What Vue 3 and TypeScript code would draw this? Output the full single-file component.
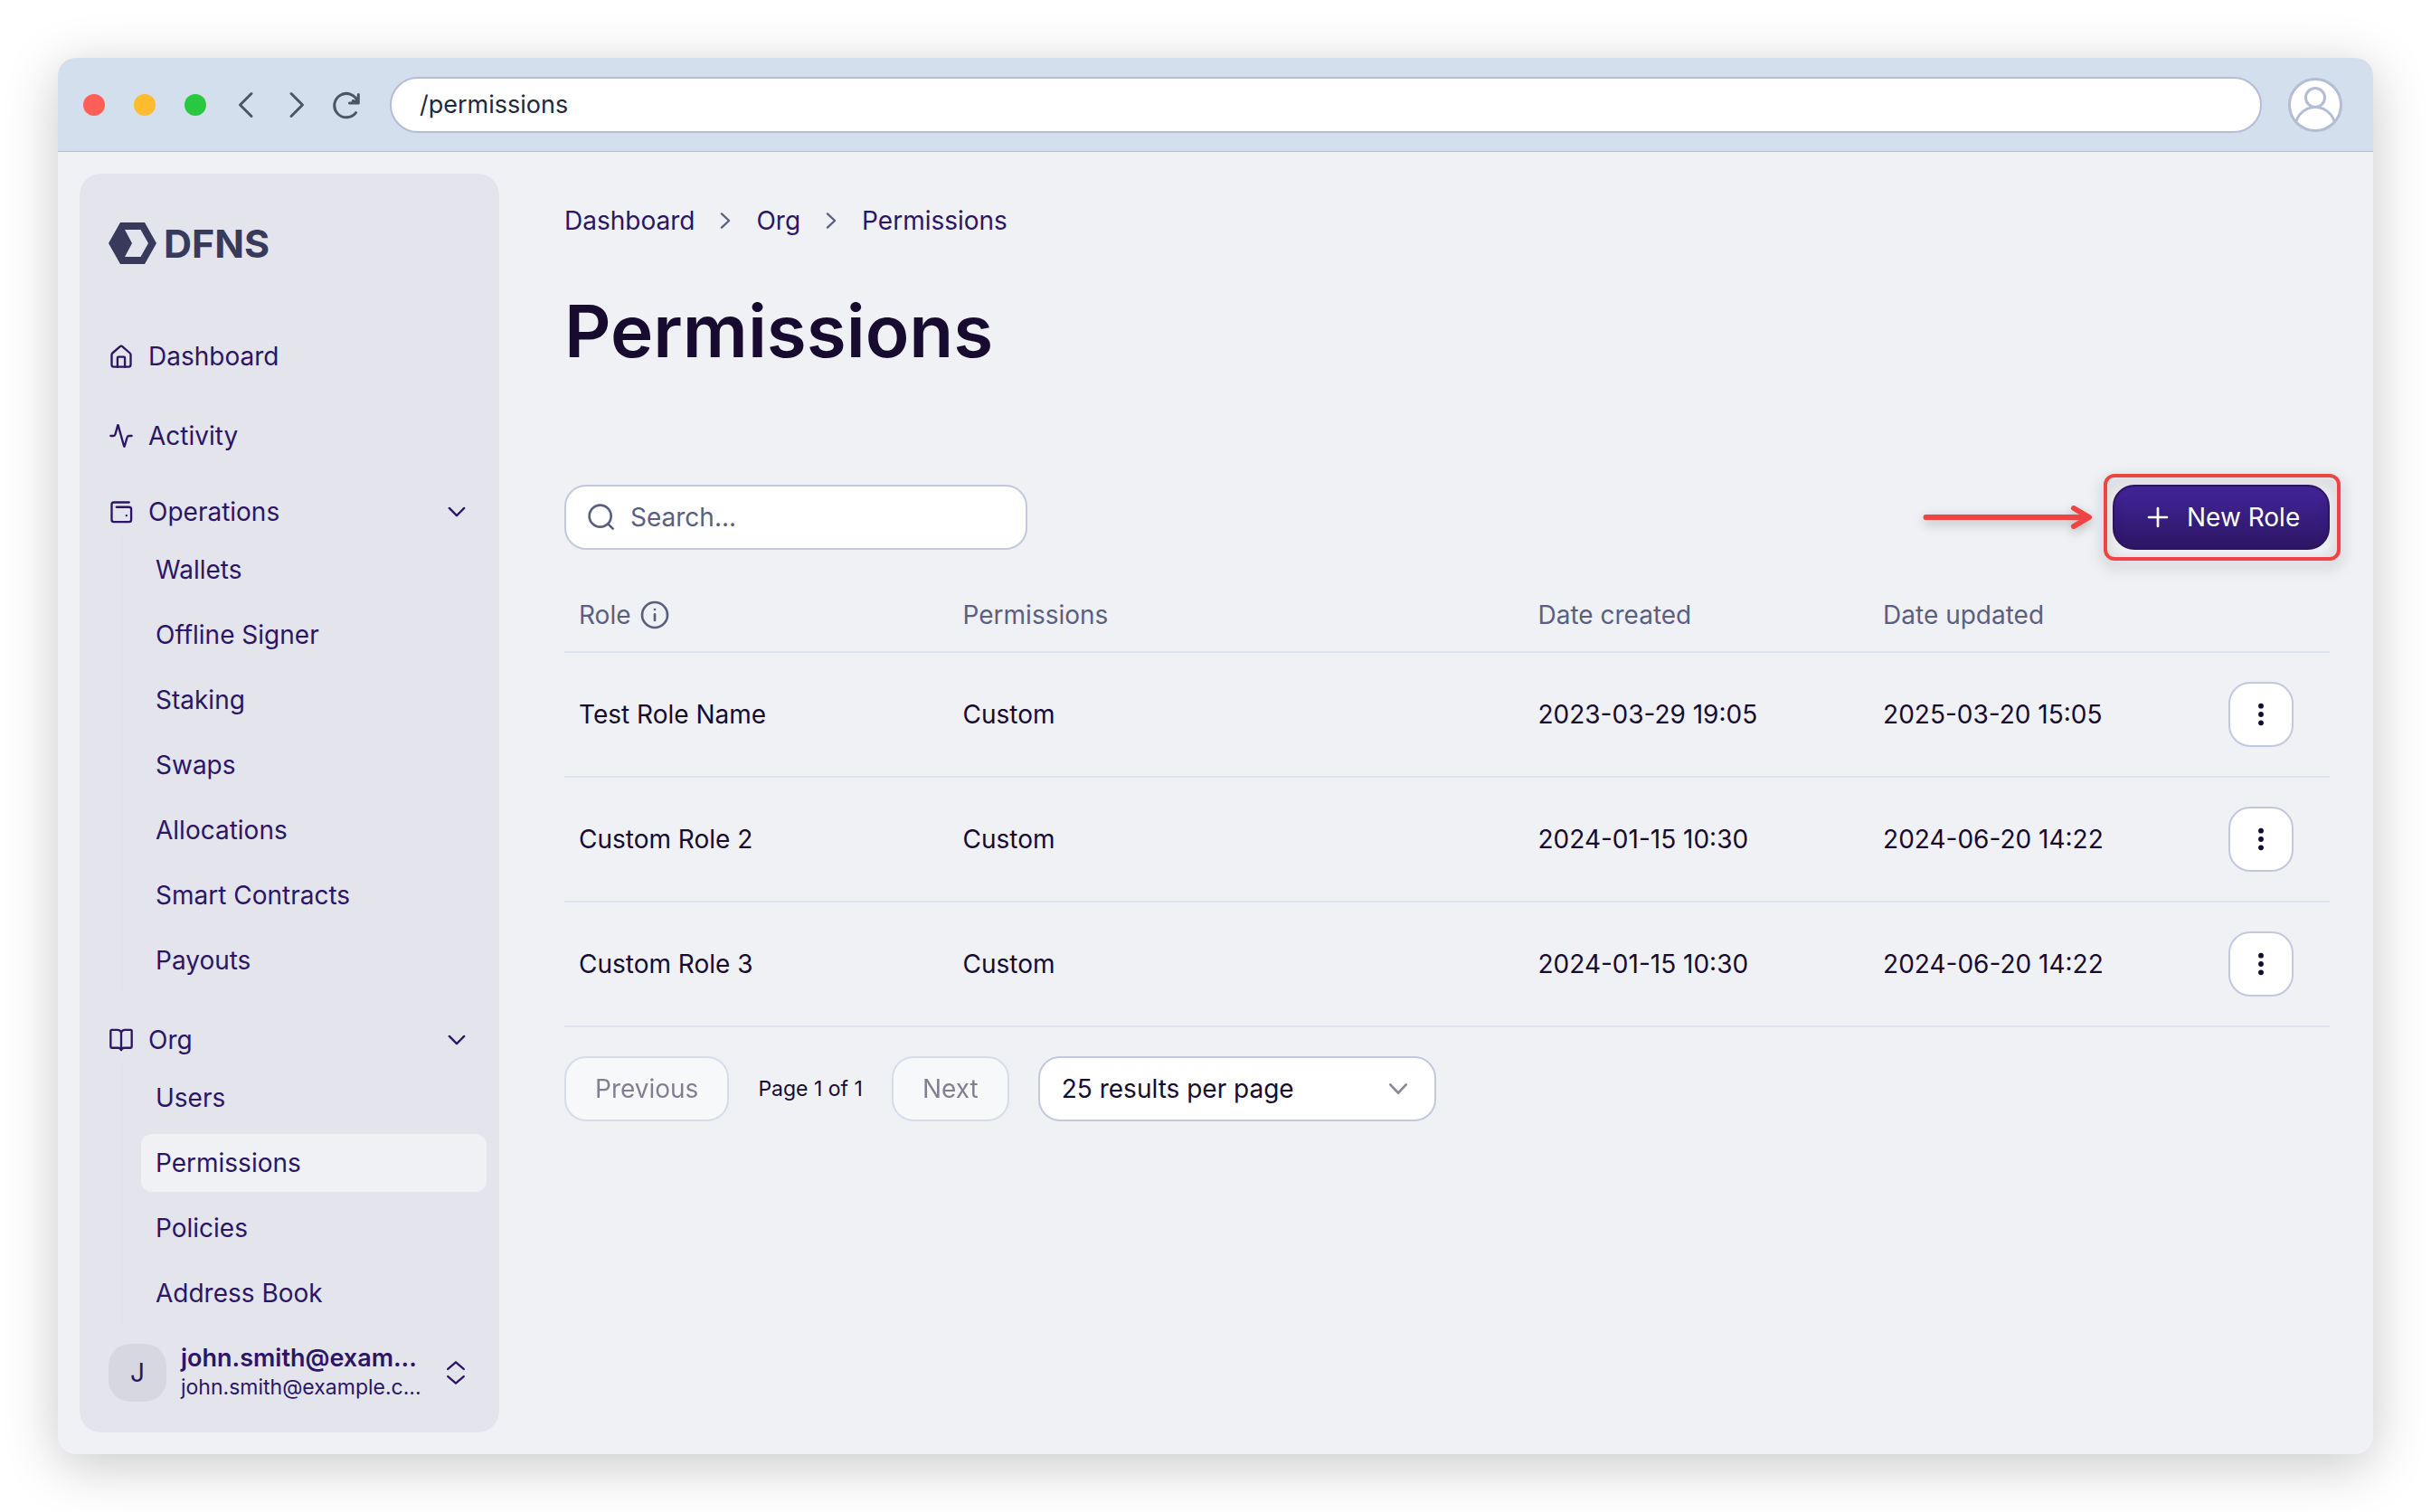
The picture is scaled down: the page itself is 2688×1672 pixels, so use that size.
<script setup lang="ts">
import { ref } from 'vue'

interface Role {
  name: string
  permissions: string
  created: string
  updated: string
}

const address = ref('/permissions')
const search = ref('')
const pageSize = ref('25')

const operations: string[] = [
  'Wallets',
  'Offline Signer',
  'Staking',
  'Swaps',
  'Allocations',
  'Smart Contracts',
  'Payouts',
]
const org: string[] = ['Users', 'Permissions', 'Policies', 'Address Book']
const current = 'Permissions'

const roles: Role[] = [
  { name: 'Test Role Name', permissions: 'Custom', created: '2023-03-29 19:05', updated: '2025-03-20 15:05' },
  { name: 'Custom Role 2', permissions: 'Custom', created: '2024-01-15 10:30', updated: '2024-06-20 14:22' },
  { name: 'Custom Role 3', permissions: 'Custom', created: '2024-01-15 10:30', updated: '2024-06-20 14:22' },
]
</script>

<template>
  <div class="window">
    <header class="chrome">
      <div class="lights">
        <span class="light red"></span>
        <span class="light amber"></span>
        <span class="light green"></span>
      </div>
      <div class="controls">
        <button type="button" class="chrome-btn" aria-label="Back">
          <svg viewBox="0 0 32 32"><path d="M22 3.500L9.500 16L22 28.500" /></svg>
        </button>
        <button type="button" class="chrome-btn" aria-label="Forward">
          <svg viewBox="0 0 32 32"><path d="M10 3.500L22.500 16L10 28.500" /></svg>
        </button>
        <button type="button" class="chrome-btn" aria-label="Reload">
          <svg viewBox="0 0 32 32"><path d="M25.500 24.600A13.200 13.200 0 1 1 27.500 12.500M28.300 4.500v9.500h-9.800M28.300 14l-6-2.500" /></svg>
        </button>
      </div>
      <input v-model="address" class="address" type="text" aria-label="Address" />
      <svg class="profile" viewBox="0 0 60 60" aria-hidden="true">
        <circle cx="30" cy="30" r="28.500" fill="#fff" />
        <circle cx="30" cy="22" r="10.500" />
        <path d="M9 48a22 22 0 0 1 42 0" />
      </svg>
    </header>

    <div class="body">
      <aside class="sidebar">
        <a href="#" class="logo" aria-label="DFNS home">
          <svg viewBox="0 0 53 46">
            <path fill-rule="evenodd" d="M13 0H40L53 23L40 46H13L0 23ZM18 8L26 23L18 38H35.500L44 23L35.500 8Z" />
          </svg>
          <span>DFNS</span>
        </a>

        <nav class="nav">
          <a href="#" class="top-link">
            <svg class="icon" viewBox="0 0 24 24">
              <path d="M3 10.500a2 2 0 0 1 .7-1.500l7-6.200a2 2 0 0 1 2.600 0l7 6.200a2 2 0 0 1 .7 1.500V20a2 2 0 0 1-2 2H5a2 2 0 0 1-2-2z" />
              <path d="M8.500 22v-8.500a1 1 0 0 1 1-1h5a1 1 0 0 1 1 1V22" />
            </svg>
            Dashboard
          </a>
          <a href="#" class="top-link">
            <svg class="icon" viewBox="0 0 24 24">
              <path d="M22 12h-2.500a2 2 0 0 0-1.900 1.500l-2.400 8.400a.2.2 0 0 1-.5 0L9.200 2.200a.2.2 0 0 0-.5 0l-2.300 8.300A2 2 0 0 1 4.500 12H2" />
            </svg>
            Activity
          </a>

          <section class="group">
            <button type="button" class="group-head">
              <svg class="icon" viewBox="0 0 24 24">
                <path d="M19.500 3H5a2 2 0 0 0-2 2v14.500a2 2 0 0 0 2 2h14.500a2 2 0 0 0 2-2V9.500a2 2 0 0 0-2-2H7.500" />
                <path d="M17 15.500h.01" />
              </svg>
              <span>Operations</span>
              <svg class="icon caret" viewBox="0 0 24 24"><path d="M5 8.500l7 7 7-7" /></svg>
            </button>
            <ul class="sub">
              <li v-for="item in operations" :key="item"><a href="#" class="sub-link">{{ item }}</a></li>
            </ul>
          </section>

          <section class="group">
            <button type="button" class="group-head">
              <svg class="icon" viewBox="0 0 24 24">
                <path d="M12 4.500v17" />
                <path d="M3 19.500a1 1 0 0 1-1-1V3.500a1 1 0 0 1 1-1h5.500a4 4 0 0 1 3.500 2 4 4 0 0 1 3.500-2H21a1 1 0 0 1 1 1v15a1 1 0 0 1-1 1h-6a3 3 0 0 0-3 2 3 3 0 0 0-3-2z" />
              </svg>
              <span>Org</span>
              <svg class="icon caret" viewBox="0 0 24 24"><path d="M5 8.500l7 7 7-7" /></svg>
            </button>
            <ul class="sub">
              <li v-for="item in org" :key="item">
                <a href="#" class="sub-link" :class="{ active: item === current }">{{ item }}</a>
              </li>
            </ul>
          </section>
        </nav>

        <button type="button" class="account">
          <span class="initial">J</span>
          <span class="who">
            <strong>john.smith@exam...</strong>
            <small>john.smith@example.c...</small>
          </span>
          <svg class="icon caret" viewBox="0 0 24 24"><path d="M4.500 8.500L12 2l7.500 6.500M4.500 15.500l7.500 6.500 7.500-6.500" /></svg>
        </button>
      </aside>

      <main class="main">
        <nav class="crumbs" aria-label="Breadcrumb">
          <a href="#">Dashboard</a>
          <svg class="icon" viewBox="0 0 24 24"><path d="M8.500 5.500L15.500 12l-7 6.500" /></svg>
          <a href="#">Org</a>
          <svg class="icon" viewBox="0 0 24 24"><path d="M8.500 5.500L15.500 12l-7 6.500" /></svg>
          <a href="#">Permissions</a>
        </nav>

        <h1>Permissions</h1>

        <div class="toolbar">
          <label class="search">
            <svg class="icon large" viewBox="0 0 24 24">
              <circle cx="11" cy="11" r="9" /><path d="M17.500 17.500l4 4" />
            </svg>
            <input v-model="search" type="text" placeholder="Search..." aria-label="Search roles" />
          </label>
          <div class="callout">
            <svg class="arrow" viewBox="0 0 188 28" aria-hidden="true">
              <path d="M3.500 14H183M167 4l17 10-17 10" />
            </svg>
            <button type="button" class="new-role">
              <svg class="icon large" viewBox="0 0 24 24"><path d="M12 4.500v15M4.500 12h15" /></svg>
              New Role
            </button>
            <span class="highlight"></span>
          </div>
        </div>

        <table class="roles">
          <colgroup>
            <col class="c-role" />
            <col class="c-perm" />
            <col class="c-date" />
            <col class="c-date" />
            <col />
          </colgroup>
          <thead>
            <tr>
              <th scope="col">
                <span class="with-icon">
                  Role
                  <svg class="icon large" viewBox="0 0 24 24">
                    <circle cx="12" cy="12" r="10.500" /><path d="M12 11.500v5M12 7.500h.01" />
                  </svg>
                </span>
              </th>
              <th scope="col">Permissions</th>
              <th scope="col">Date created</th>
              <th scope="col">Date updated</th>
              <th></th>
            </tr>
          </thead>
          <tbody>
            <tr v-for="role in roles" :key="role.name">
              <td>{{ role.name }}</td>
              <td>{{ role.permissions }}</td>
              <td>{{ role.created }}</td>
              <td>{{ role.updated }}</td>
              <td>
                <button type="button" class="more" :aria-label="`Actions for ${role.name}`">
                  <svg viewBox="0 0 24 24">
                    <circle cx="12" cy="4" r="2.500" /><circle cx="12" cy="12" r="2.500" /><circle cx="12" cy="20" r="2.500" />
                  </svg>
                </button>
              </td>
            </tr>
          </tbody>
        </table>

        <div class="pager">
          <button type="button" class="page-btn" disabled>Previous</button>
          <span class="page-info">Page 1 of 1</span>
          <button type="button" class="page-btn" disabled>Next</button>
          <div class="page-size">
            <select v-model="pageSize" aria-label="Results per page">
              <option value="25">25 results per page</option>
              <option value="50">50 results per page</option>
            </select>
            <svg class="icon large" viewBox="0 0 24 24"><path d="M5.500 8.500l6.500 7 6.500-7" /></svg>
          </div>
        </div>
      </main>
    </div>
  </div>
</template>

<style>
body {
  background: #fff;
}
</style>

<style scoped>
* {
  box-sizing: border-box;
}

.window {
  margin: 64px;
  border-radius: 20px;
  background: #eff1f5;
  box-shadow: 0 12px 60px rgba(0, 0, 0, 0.22);
  font-family: Inter, 'Liberation Sans', sans-serif;
  font-size: 28px;
  line-height: 40px;
  color: #170b30;
}

button,
input,
select {
  font: inherit;
  color: inherit;
  margin: 0;
}

button {
  padding: 0;
  border: 0;
  background: none;
  cursor: pointer;
}

a {
  color: #2c1664;
  text-decoration: none;
}

.icon {
  flex: none;
  width: 28px;
  height: 28px;
  fill: none;
  stroke: currentColor;
  stroke-width: 2;
  stroke-linecap: round;
  stroke-linejoin: round;
}

.icon.large {
  width: 32px;
  height: 32px;
}

/* browser chrome */
.chrome {
  display: flex;
  align-items: center;
  height: 104px;
  padding: 0 34px 0 28px;
  border-bottom: 1px solid #b2bfd3;
  border-radius: 20px 20px 0 0;
  background: #d3dfec;
}

.lights {
  display: flex;
  gap: 32px;
}

.light {
  width: 24px;
  height: 24px;
  border-radius: 50%;
}

.red {
  background: #ff5f57;
}

.amber {
  background: #febc2e;
}

.green {
  background: #28c840;
}

.controls {
  display: flex;
  gap: 24px;
  margin: 0 31px 0 28px;
}

.chrome-btn,
.chrome-btn svg {
  display: block;
  width: 32px;
  height: 32px;
}

.chrome-btn svg {
  fill: none;
  stroke: #4b5563;
  stroke-width: 3;
  stroke-linecap: round;
  stroke-linejoin: round;
}

.address {
  flex: 1;
  min-width: 0;
  height: 62px;
  padding: 0 31px;
  border: 2px solid #b4bdd4;
  border-radius: 31px;
  background: #fff;
  color: #1f2937;
  font-size: 27px;
}

.profile {
  width: 60px;
  height: 60px;
  margin-left: 29px;
  fill: none;
  stroke: #b4bdd4;
  stroke-width: 3;
}

/* layout */
.body {
  display: flex;
  padding: 24px;
}

.sidebar {
  display: flex;
  flex: none;
  flex-direction: column;
  width: 464px;
  padding: 54px 14px 34px 32px;
  border-radius: 24px;
  background: #e3e4ec;
  color: #2c1664;
}

.logo {
  display: flex;
  align-items: center;
  gap: 8px;
  height: 46px;
  color: #373a5b;
  font-size: 43px;
  font-weight: 700;
}

.logo svg {
  width: 53px;
  height: 46px;
  fill: currentColor;
}

.nav {
  display: flex;
  flex-direction: column;
  gap: 24px;
  margin-top: 70px;
}

.top-link,
.group-head {
  display: flex;
  align-items: center;
  gap: 16px;
  width: 100%;
  height: 64px;
}

.group-head {
  height: 56px;
  padding-right: 19px;
  text-align: left;
}

.group-head .caret,
.account .caret {
  margin-left: auto;
}

.sub {
  display: flex;
  flex-direction: column;
  gap: 8px;
  margin: 0 0 0 14px;
  padding: 4px 0 4px 20px;
  border-left: 2px solid #dfe3ee;
  list-style: none;
}

.sub-link {
  display: block;
  padding: 12px 16px;
  border-radius: 12px;
}

.sub-link.active {
  background: #eff1f5;
}

.account {
  display: flex;
  align-items: center;
  gap: 16px;
  margin-top: 20px;
  padding-right: 20px;
  text-align: left;
}

.initial {
  flex: none;
  width: 64px;
  height: 64px;
  border-radius: 24px;
  background: #d6d7e0;
  line-height: 64px;
  text-align: center;
}

.who {
  display: flex;
  flex-direction: column;
  min-width: 0;
  line-height: 32px;
  white-space: nowrap;
}

.who strong {
  font-size: 27px;
  font-weight: 600;
}

.who small {
  font-size: 23px;
}

.main {
  flex: 1;
  min-width: 0;
  padding: 32px 24px 0 72px;
}

.crumbs {
  display: flex;
  align-items: center;
  gap: 20px;
}

.crumbs .icon {
  color: #5a5f80;
}

h1 {
  margin: 54px 0 0;
  font-size: 80px;
  font-weight: 600;
  line-height: 96px;
}

.toolbar {
  display: flex;
  align-items: center;
  justify-content: space-between;
  margin-top: 122px;
}

.search {
  display: flex;
  align-items: center;
  gap: 16px;
  width: 512px;
  height: 72px;
  padding: 0 23px;
  border: 2px solid #c3c8de;
  border-radius: 24px;
  background: #fff;
  color: #5a5f80;
}

.search input {
  flex: 1;
  min-width: 0;
  padding: 0;
  border: 0;
  outline: 0;
  background: none;
}

.search input::placeholder {
  color: #5a5f80;
  opacity: 1;
}

.callout {
  position: relative;
  display: flex;
  align-items: center;
  gap: 22px;
}

.arrow {
  width: 188px;
  height: 28px;
  overflow: visible;
  fill: none;
  stroke: #ef4444;
  stroke-width: 6;
  stroke-linecap: round;
  stroke-linejoin: round;
  filter: drop-shadow(0 4px 6px rgba(0, 0, 0, 0.25));
}

.new-role {
  display: flex;
  align-items: center;
  gap: 16px;
  width: 240px;
  height: 72px;
  padding-left: 32px;
  border: 2px solid #2c1664;
  border-radius: 24px;
  background: linear-gradient(#43249a, #2c1664);
  color: #fff;
}

.highlight {
  position: absolute;
  top: -12px;
  right: -12px;
  bottom: -12px;
  width: 262px;
  border: 4px solid #ef4444;
  border-radius: 12px;
  filter: drop-shadow(0 6px 8px rgba(0, 0, 0, 0.3));
  pointer-events: none;
}

/* roles table */
.roles {
  width: 100%;
  margin-top: 32px;
  border-collapse: separate;
  border-spacing: 0;
  table-layout: fixed;
}

.c-role {
  width: 21.75%;
}

.c-perm {
  width: 32.58%;
}

.c-date {
  width: 19.55%;
}

th,
td {
  padding: 0 16px;
  border-bottom: 2px solid #dfe3ef;
  text-align: left;
}

th {
  height: 82px;
  color: #5a5f80;
  font-weight: 400;
}

td {
  height: 138px;
}

.with-icon {
  display: flex;
  align-items: center;
  gap: 10px;
}

.more {
  display: grid;
  place-items: center;
  width: 72px;
  height: 72px;
  border: 2px solid #c3c8de;
  border-radius: 24px;
  background: #fff;
}

.more svg {
  width: 28px;
  height: 28px;
  fill: #170b30;
}

/* pagination */
.pager {
  display: flex;
  align-items: center;
  gap: 32px;
  margin-top: 32px;
}

.page-btn {
  height: 72px;
  padding: 0 32px;
  border: 2px solid #c3c8de;
  border-radius: 24px;
  background: #fff;
  opacity: 0.5;
}

.page-info {
  font-size: 23px;
}

.page-size {
  position: relative;
}

.page-size select {
  display: block;
  width: 440px;
  height: 72px;
  padding: 0 24px;
  border: 2px solid #c3c8de;
  border-radius: 24px;
  background: #fff;
  appearance: none;
}

.page-size .icon {
  position: absolute;
  top: 20px;
  right: 26px;
  color: #8b859a;
  pointer-events: none;
}
</style>
